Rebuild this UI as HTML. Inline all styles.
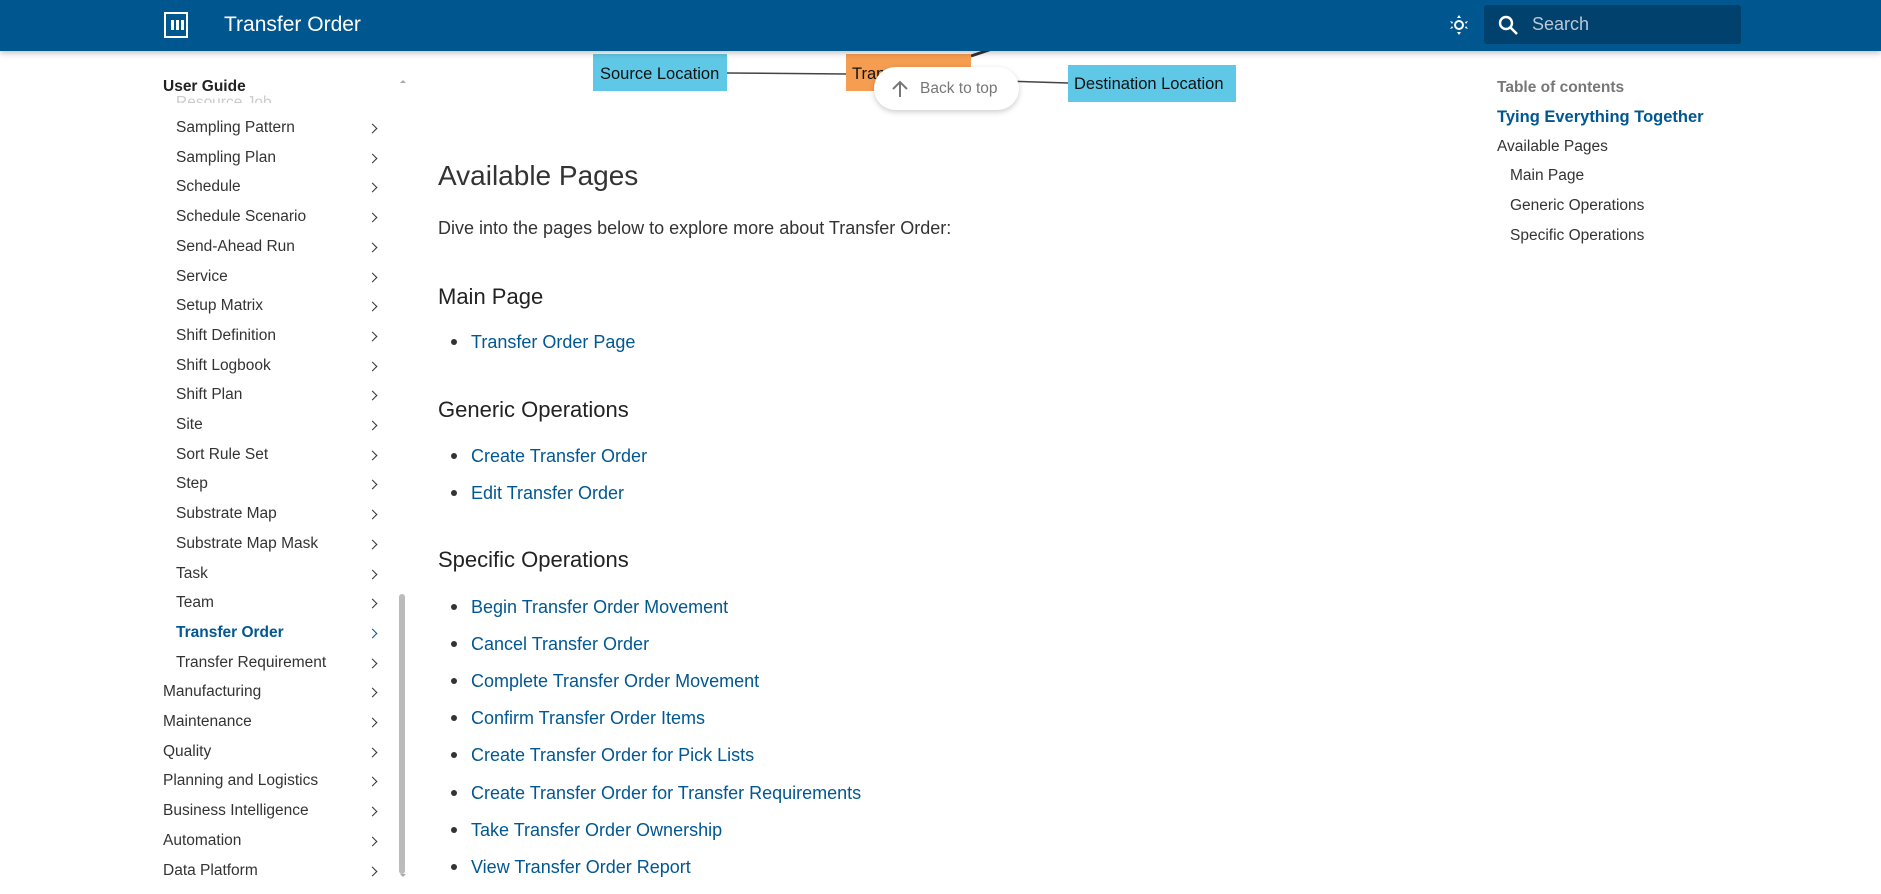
<!DOCTYPE html>
<html><head><meta charset="utf-8"><style>
*{margin:0;padding:0;box-sizing:border-box}
body{width:1881px;height:894px;overflow:hidden;background:#fff;font-family:"Liberation Sans",sans-serif;color:#333;position:relative}
.hdr{position:absolute;left:0;top:0;width:1881px;height:51px;background:#00568f;box-shadow:0 2px 6px rgba(0,0,0,.25);z-index:5}
.hdr .title{position:absolute;left:224px;top:13px;color:#fff;font-size:21px}
.logo{position:absolute;left:164px;top:12px;width:24px;height:26px;border:2px solid #fff}
.logo i{position:absolute;top:6px;width:3px;height:10px;background:#fff}
.search{position:absolute;left:1484px;top:5px;width:257px;height:39px;background:#00416e;border-radius:3px}
.search span{position:absolute;left:48px;top:9px;color:#b8c9d8;font-size:18px}
.abs{position:absolute;white-space:nowrap}
.nav{font-size:15.5px;color:#333}
.chev{position:absolute;left:369px;width:7px;height:7px;border-right:1.8px solid #333;border-top:1.8px solid #333;transform:rotate(45deg)}
a{color:#005792;text-decoration:none}
.li{font-size:18px;color:#005792}
.dot{position:absolute;width:6px;height:6px;border-radius:3px;background:#333}
.toc{font-size:15.5px;color:#333}
</style></head><body>
<div class="hdr">
 <div class="logo"><i style="left:5px"></i><i style="left:10px"></i><i style="left:15px"></i></div>
 <div class="title">Transfer Order</div>
 <svg class="abs" style="left:1447px;top:13px" width="24" height="24" viewBox="0 0 24 24"><circle cx="12" cy="12" r="4" fill="none" stroke="#fff" stroke-width="2"/><path d="M12 2l2 3h-4zM12 22l-2-3h4zM3 8l3 1-1 2zM21 16l-3-1 1-2zM3 16l2-3 1 2zM21 8l-2 3-1-2z" fill="#fff"/></svg>
 <div class="search"><svg class="abs" style="left:12px;top:8px" width="24" height="24" viewBox="0 0 24 24"><circle cx="10" cy="10" r="6" fill="none" stroke="#fff" stroke-width="2.4"/><path d="M14.5 14.5L21 21" stroke="#fff" stroke-width="2.6"/></svg><span>Search</span></div>
</div>

<svg class="abs" style="left:0;top:0" width="1300" height="120">
 <line x1="727" y1="73" x2="846" y2="74" stroke="#444" stroke-width="1.5"/>
 <line x1="971" y1="80" x2="1068" y2="83" stroke="#444" stroke-width="1.5"/>
 <line x1="971" y1="56" x2="1004" y2="45" stroke="#333" stroke-width="3"/>
 <rect x="593" y="54" width="134" height="37" fill="#5fc8e6"/>
 <rect x="846" y="54" width="125" height="37" fill="#f59d51"/>
 <rect x="1068" y="65" width="168" height="37" fill="#5fc8e6"/>
 <text x="600" y="79" font-family="Liberation Sans" font-size="16.5" fill="#111">Source Location</text>
 <text x="852" y="79" font-family="Liberation Sans" font-size="16.5" fill="#111">Transfer Order</text>
 <text x="1074" y="89" font-family="Liberation Sans" font-size="16.5" fill="#111">Destination Location</text>
</svg>
<div class="abs" style="left:874px;top:67px;width:145px;height:43px;border-radius:22px;background:#fff;box-shadow:0 2px 6px rgba(0,0,0,.2);font-size:15.5px;color:#777;padding:13px 0 0 46px">Back to top
 <svg class="abs" style="left:16px;top:12px" width="20" height="20" viewBox="0 0 20 20"><path d="M10 18V3M3 10l7-7 7 7" fill="none" stroke="#777" stroke-width="2"/></svg></div>

<div class="abs" style="left:163px;top:78px;font-size:15.5px;font-weight:bold;color:#222">User Guide</div>
<div class="abs nav" style="left:176px;top:94px;color:#ccc;height:9px;overflow:hidden">Resource Job</div>
<div class="abs" style="left:400px;top:77px;width:0;height:0;border:3px solid transparent;border-bottom-color:#aaa"></div>
<div class="abs" style="left:399px;top:594px;width:6px;height:280px;background:#bbb;border-radius:3px"></div>
<div class="abs" style="left:400px;top:874px;width:0;height:0;border:3px solid transparent;border-top-color:#aaa"></div>
<div id="nav"></div>

<div class="abs" style="left:438px;top:160px;font-size:28px;font-weight:300;color:#333">Available Pages</div>
<div class="abs" style="left:438px;top:218px;font-size:18px;color:#333">Dive into the pages below to explore more about Transfer Order:</div>
<div class="abs" style="left:438px;top:284px;font-size:22px;color:#222">Main Page</div>
<div class="abs" style="left:438px;top:397px;font-size:22px;color:#222">Generic Operations</div>
<div class="abs" style="left:438px;top:547px;font-size:22px;color:#222">Specific Operations</div>
<div id="lists"></div>

<div class="abs" style="left:1497px;top:79px;font-size:15.5px;font-weight:bold;color:#777">Table of contents</div>
<div class="abs" style="left:1497px;top:108px;font-size:16.5px;font-weight:bold;color:#005792">Tying Everything Together</div>
<div class="abs toc" style="left:1497px;top:138px">Available Pages</div>
<div class="abs toc" style="left:1510px;top:167px">Main Page</div>
<div class="abs toc" style="left:1510px;top:197px">Generic Operations</div>
<div class="abs toc" style="left:1510px;top:227px">Specific Operations</div>

<script>
var sub=["Sampling Pattern","Sampling Plan","Schedule","Schedule Scenario","Send-Ahead Run","Service","Setup Matrix","Shift Definition","Shift Logbook","Shift Plan","Site","Sort Rule Set","Step","Substrate Map","Substrate Map Mask","Task","Team","Transfer Order","Transfer Requirement"];
var top2=["Manufacturing","Maintenance","Quality","Planning and Logistics","Business Intelligence","Automation","Data Platform"];
var h="";var y=128;
sub.forEach(function(s){var act=s=="Transfer Order";
h+='<div class="abs nav" style="left:176px;top:'+(y-9)+'px;'+(act?'font-weight:bold;color:#005792':'')+'">'+s+'</div><div class="chev" style="top:'+(y-3)+'px;'+(act?'border-color:#005792':'')+'"></div>';y+=29.7;});
top2.forEach(function(s){h+='<div class="abs nav" style="left:163px;top:'+(y-9)+'px">'+s+'</div><div class="chev" style="top:'+(y-3)+'px"></div>';y+=29.7;});
document.getElementById("nav").innerHTML=h;
var L=[[343,"Transfer Order Page"],[457,"Create Transfer Order"],[494,"Edit Transfer Order"]];
var sp=["Begin Transfer Order Movement","Cancel Transfer Order","Complete Transfer Order Movement","Confirm Transfer Order Items","Create Transfer Order for Pick Lists","Create Transfer Order for Transfer Requirements","Take Transfer Order Ownership","View Transfer Order Report"];
sp.forEach(function(s,i){L.push([608+i*37.1,s]);});
var g="";L.forEach(function(l){g+='<div class="dot" style="left:451px;top:'+(l[0]-4)+'px"></div><div class="abs li" style="left:471px;top:'+(l[0]-11)+'px">'+l[1]+'</div>';});
document.getElementById("lists").innerHTML=g;
</script>
</body></html>
